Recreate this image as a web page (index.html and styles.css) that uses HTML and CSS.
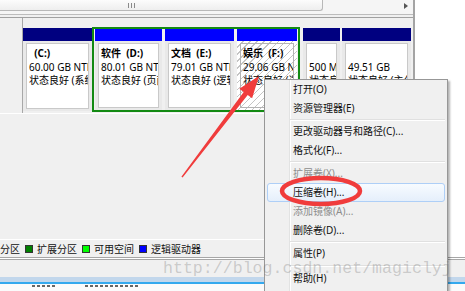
FILE: index.html
```html
<!DOCTYPE html>
<html>
<head>
<meta charset="utf-8">
<link rel="stylesheet" href="styles.css">
</head>
<body>
<div class="screen">
  <div class="main">
    <div class="center">
      <div class="hscroll">
        <div class="thumb"><span class="grip"></span></div>
        <span class="arrow"></span>
      </div>
      <div class="disk-row">
        <div class="disk-label"></div>
        <div class="parts">
          <div class="part primary w-c">
            <div class="head navy"></div>
            <div class="body"><div class="inner"><div class="name">  (C:)</div><div>60.00 GB NTFS</div><div>状态良好 (系统, 启动, 页面文件, 活动, 故障转储, 主分区)</div></div></div>
          </div>
          <div class="extended">
            <div class="part w-d">
              <div class="head blue"></div>
              <div class="body"><div class="inner"><div class="name">软件  (D:)</div><div>80.01 GB NTFS</div><div>状态良好 (页面文件, 逻辑驱动器)</div></div></div>
            </div>
            <div class="part w-e">
              <div class="head blue"></div>
              <div class="body"><div class="inner"><div class="name">文档  (E:)</div><div>79.01 GB NTFS</div><div>状态良好 (逻辑驱动器)</div></div></div>
            </div>
            <div class="part w-f selected">
              <div class="head blue"></div>
              <div class="body"><div class="inner"><div class="name">娱乐  (F:)</div><div>29.06 GB NTFS</div><div>状态良好 (逻辑驱动器)</div></div></div>
            </div>
          </div>
          <div class="part primary w-500">
            <div class="head navy"></div>
            <div class="body"><div class="inner"><div> </div><div>500 MB</div><div>状态良好 (主分区)</div></div></div>
          </div>
          <div class="part primary w-49">
            <div class="head navy"></div>
            <div class="body"><div class="inner"><div> </div><div>49.51 GB</div><div>状态良好 (主分区)</div></div></div>
          </div>
        </div>
      </div>
      <div class="blank"></div>
      <div class="legend">
        <span>分区</span>
        <span class="key k-ext"></span><span>扩展分区</span>
        <span class="key k-free"></span><span>可用空间</span>
        <span class="key k-log"></span><span>逻辑驱动器</span>
      </div>
    </div>
    <div class="actions"></div>
  </div>
  <div class="status"></div>
  <div class="taskbar">
    <div class="tb-glass"></div>
    <div class="tb-line"></div>
    <div class="tb-rows"><span class="frag f1"></span><span class="frag f2"></span></div>
  </div>

  <div class="menu">
    <div class="item">打开(O)</div>
    <div class="item">资源管理器(E)</div>
    <div class="sep"></div>
    <div class="item">更改驱动器号和路径(C)...</div>
    <div class="item">格式化(F)...</div>
    <div class="sep"></div>
    <div class="item disabled">扩展卷(X)...</div>
    <div class="item hover">压缩卷(H)...</div>
    <div class="item disabled">添加镜像(A)...</div>
    <div class="item">删除卷(D)...</div>
    <div class="sep"></div>
    <div class="item">属性(P)</div>
    <div class="sep wide"></div>
    <div class="item">帮助(H)</div>
  </div>

  <svg class="marks" width="465" height="291" viewBox="0 0 465 291">
    <polygon points="259,76 252.1,98.3 247.7,95 182.6,177.6 181.4,176.8 243.7,92 239.3,88.7" fill="#f03c3c"/>
    <ellipse cx="321" cy="191" rx="39" ry="13" fill="none" stroke="#f03c3c" stroke-width="4.5"/>
  </svg>

  <div class="watermark">http://blog.csdn.net/magiclyj</div>
</div>
</body>
</html>
```

FILE: styles.css
```css
* { box-sizing: border-box; }
html, body { margin: 0; padding: 0; }
body {
  width: 465px;
  height: 291px;
  overflow: hidden;
  background: #f0f0f0;
  font-family: "Noto Sans", "Noto Sans CJK SC", sans-serif;
  font-size: 10px;
  color: #000;
}
.screen { position: relative; width: 465px; height: 291px; overflow: hidden; }

.main { display: flex; height: 257px; }
.center {
  width: 415px;
  display: flex;
  flex-direction: column;
  border-right: 2px solid #a4a4a4;
}
.actions { flex: 1; background: #fff; }

/* horizontal scrollbar */
.hscroll {
  height: 15px;
  background: #f5f5f5;
  border-bottom: 1px solid #bcbcbc;
  display: flex;
  align-items: flex-start;
  justify-content: space-between;
}
.thumb {
  width: 323px;
  height: 11px;
  background: linear-gradient(#fcfcfc, #eeeeee);
  border-right: 1px solid #b8b8b8;
  border-bottom: 1px solid #b8b8b8;
  border-radius: 0 0 3px 0;
  padding: 3px 0 0 128px;
}
.grip {
  display: block;
  width: 7px;
  height: 5px;
  background: repeating-linear-gradient(to right, #8a8a8a 0 1px, transparent 1px 3px);
}
.arrow {
  width: 0;
  height: 0;
  border-left: 4px solid #555;
  border-top: 3px solid transparent;
  border-bottom: 3px solid transparent;
  margin: 3px 5px 0 0;
}

/* disk row */
.disk-row {
  margin-top: 2px;
  height: 97px;
  border-top: 1px solid #a0a0a0;
  border-bottom: 1px solid #fff;
  display: flex;
}
.disk-label { width: 23px; border-right: 1px solid #a8a8a8; }
.parts { display: flex; align-items: flex-start; padding-top: 9px; }

.part { display: flex; flex-direction: column; flex: none; }
.primary { margin-top: 1px; height: 83px; }
.w-c { width: 69px; }
.w-500 { width: 37px; margin-right: 2px; }
.w-49 { width: 69px; }
.w-d { width: 67px; }
.w-e { width: 69px; }
.w-f { width: 60px; }

.extended {
  width: 208px;
  height: 85px;
  border: 2px solid #138a13;
  display: flex;
  gap: 3px;
  padding: 0 1px;
  margin-right: 3px;
  flex: none;
}
.extended .part { height: 100%; }

.head { height: 13px; flex: none; }
.extended .head { height: 12px; }
.navy { background: #000080; }
.blue { background: #0000ff; }

.body {
  flex: 1;
  min-height: 0;
  display: flex;
  background: #e9e9e9;
  padding: 2px 3px 2px;
}
.inner {
  flex: 1;
  min-width: 0;
  background: #fff;
  border: 1px solid #c9c9c9;
  padding: 3px 0 0 2px;
  overflow: hidden;
  white-space: pre;
  line-height: 13.5px;
}
.name { font-weight: bold; }

.selected .body {
  background: repeating-linear-gradient(135deg, #ffffff 0 4px, #c4c4c4 4px 5px);
}
.selected .inner {
  background: transparent;
  border-color: #b4b4b4;
}

.blank { flex: 1; }

/* legend */
.legend {
  height: 18px;
  border-top: 1px solid #fff;
  display: flex;
  align-items: center;
  white-space: nowrap;
  color: #111;
}
.key {
  width: 8px;
  height: 8px;
  border: 1px solid #333;
  margin: 0 4px 0 5px;
}
.k-ext { background: #008000; }
.k-free { background: #00ff00; }
.k-log { background: #0000ff; }

/* status + bottom strip */
.status {
  height: 20px;
  border-top: 1px solid #a6a6a6;
  box-shadow: inset 0 1px #fff, inset 0 2px #a6a6a6;
}
.taskbar { height: 14px; display: flex; flex-direction: column; }
.tb-glass { height: 5px; background: #c2d7ec; }
.tb-line { height: 2px; background: #34a9ee; }
.tb-rows {
  flex: 1;
  background: #fbfbfb;
  display: flex;
  align-items: flex-start;
  padding: 1px 0 0 32px;
  gap: 30px;
}
.frag {
  height: 2px;
  background: repeating-linear-gradient(to right, #666 0 3px, transparent 3px 5px);
}
.f1 { width: 23px; }
.f2 { width: 53px; }

/* context menu */
.menu {
  position: absolute;
  left: 264px;
  top: 79px;
  width: 184px;
  height: 215px;
  border: 1px solid #979797;
  background-color: #f0f0f0;
  background-image: linear-gradient(to right, transparent 24px, #e2e3e3 24px, #e2e3e3 25px, #ffffff 25px, #ffffff 26px, transparent 26px);
  box-shadow: 2px 2px 2px rgba(0, 0, 0, 0.3);
  padding: 0 2px;
  font-family: "Noto Sans", "Noto Sans CJK SC", sans-serif;
  font-size: 10px;
}
.item {
  height: 19px;
  line-height: 17px;
  border: 1px solid transparent;
  border-radius: 3px;
  padding-left: 25px;
  white-space: nowrap;
  color: #111;
}
.item.disabled { color: #8d8d8d; }
.item.hover {
  border-color: #aecff7;
  background: linear-gradient(#f7fbff, #e5effb);
}
.sep {
  height: 4px;
  margin-left: 23px;
  background: linear-gradient(transparent 1px, #e0e0e0 1px, #e0e0e0 2px, #ffffff 2px, #ffffff 3px, transparent 3px);
}
.sep.wide {
  height: 6px;
  background: linear-gradient(transparent 2px, #e0e0e0 2px, #e0e0e0 3px, #ffffff 3px, #ffffff 4px, transparent 4px);
}

/* annotations */
.marks { position: absolute; left: 0; top: 0; pointer-events: none; }
.watermark {
  position: absolute;
  left: 163px;
  top: 260px;
  font-family: "Liberation Mono", monospace;
  font-size: 16.6px;
  line-height: 18px;
  color: rgba(110, 110, 110, 0.3);
  white-space: nowrap;
  pointer-events: none;
}
```
